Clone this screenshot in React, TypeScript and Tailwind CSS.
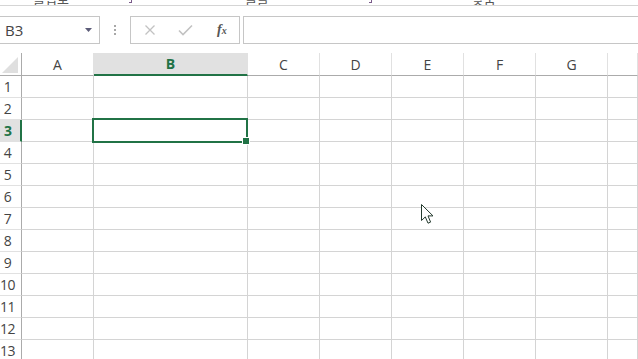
import React from 'react';

const cols = ['A', 'B', 'C', 'D', 'E', 'F', 'G', ''];
const rows = Array.from({ length: 13 }, (_, i) => i + 1);

const gridCols = 'grid grid-cols-[22px_72px_154px_72px_72px_72px_72px_72px_1fr]';

const Cursor = () => (
  <svg width="14" height="21" viewBox="0 0 14 21" className="absolute left-[421px] top-[204px]">
    <path d="M0.5 0.5 L0.5 16.5 L4.3 12.9 L7 19.2 L9.6 18.1 L7 11.9 L12 11.9 Z" fill="#fff" stroke="#243a2e" strokeWidth="1" strokeLinejoin="miter" />
  </svg>
);

export default function App() {
  return (
    <div className="relative w-[638px] h-[359px] overflow-hidden bg-white font-['Open_Sans','Noto_Sans',sans-serif] text-[#444]">
      {/* ribbon group labels, mostly scrolled off */}
      <div className="h-[6px] border-b border-[#d5d5d5] overflow-hidden">
        <div className="flex items-start h-[5px] text-[13px] leading-none text-[#555] font-['Noto_Sans_CJK_KR',sans-serif]">
          <span className="ml-[33px] -translate-y-[8px]">클립보</span>
          <span className="ml-[60px] mt-0 w-[3px] h-[3px] border-r border-b border-[#7a5a8a]" />
          <span className="ml-[113px] -translate-y-[8px]">글꼴</span>
          <span className="ml-[100px] w-[3px] h-[3px] border-r border-b border-[#7a5a8a]" />
          <span className="ml-[100px] -translate-y-[8px]">맞춤</span>
        </div>
      </div>

      {/* formula bar */}
      <div className="mt-[10px] flex h-[28px]">
        <div className="w-[100px] border-y border-r border-[#c6c6c6] flex items-center justify-between pl-[5px] pr-[7px]">
          <span className="text-[15px] text-[#444]">B3</span>
          <svg width="7" height="4" viewBox="0 0 7 4"><path d="M0 0 H7 L3.5 4 Z" fill="#5c5c78" /></svg>
        </div>
        <div className="w-[30px] flex flex-col items-center justify-center gap-[2px] pr-[1px]">
          <span className="w-[2px] h-[2px] bg-[#a8a8a8]" />
          <span className="w-[2px] h-[2px] bg-[#a8a8a8]" />
          <span className="w-[2px] h-[2px] bg-[#a8a8a8]" />
        </div>
        <div className="w-[110px] border border-[#c6c6c6] flex items-center">
          <svg width="12" height="12" viewBox="0 0 12 12" className="ml-[13px]">
            <path d="M1.5 1.5 L10.5 10.5 M10.5 1.5 L1.5 10.5" stroke="#c2c2c2" strokeWidth="1.3" />
          </svg>
          <svg width="15" height="12" viewBox="0 0 15 12" className="ml-[22px]">
            <path d="M1 6.5 L5 10.5 L14 1.5" stroke="#c2c2c2" strokeWidth="1.6" fill="none" />
          </svg>
          <span className="ml-[24px] font-['Liberation_Serif',serif] italic font-bold text-[#555] text-[14px] leading-none">
            f<span className="text-[10px]">x</span>
          </span>
        </div>
        <div className="ml-[3px] flex-1 border-y border-l border-[#c6c6c6]" />
      </div>

      {/* sheet */}
      <div className="mt-[9px]">
        <div className={`${gridCols} h-[23px]`}>
          <div className="border-r border-b border-[#ababab] relative">
            <svg width="16" height="16" viewBox="0 0 16 16" className="absolute right-[3px] bottom-[2px]">
              <path d="M16 0 V16 H0 Z" fill="#dfdfdf" />
            </svg>
          </div>
          {cols.map((c, i) =>
            c === 'B' ? (
              <div key={i} className="bg-[#e1e1e1] border-r border-r-[#e1e1e1] border-b-2 border-b-[#217346] flex items-center justify-center text-[14px] font-bold text-[#217346]">
                {c}
              </div>
            ) : (
              <div key={i} className="border-r border-r-[#e1e1e1] border-b border-b-[#ababab] flex items-center justify-center text-[14px] text-[#444]">
                {c}
              </div>
            )
          )}
        </div>
        {rows.map(r => (
          <div key={r} className={`${gridCols} h-[22px]`}>
            {r === 3 ? (
              <div className="bg-[#e1e1e1] border-r-2 border-r-[#217346] border-b border-b-[#e1e1e1] flex items-center justify-center pr-[4px] text-[14px] font-bold text-[#217346]">
                {r}
              </div>
            ) : (
              <div className="border-r border-r-[#ababab] border-b border-b-[#e1e1e1] flex items-center justify-center pr-[6px] text-[14px] leading-none tracking-[-0.5px] text-[#444]">
                {r}
              </div>
            )}
            {cols.map((c, i) => (
              <div key={i} className="relative border-r border-b border-[#d4d4d4]">
                {r === 3 && c === 'B' && (
                  <>
                    <div className="absolute left-[-2px] top-[-2px] w-[156px] h-[25px] border-2 border-[#217346] z-10" />
                    <div className="absolute left-[149px] top-[18px] w-[6px] h-[6px] bg-[#217346] outline outline-1 outline-white z-20" />
                  </>
                )}
              </div>
            ))}
          </div>
        ))}
      </div>

      <Cursor />
    </div>
  );
}
